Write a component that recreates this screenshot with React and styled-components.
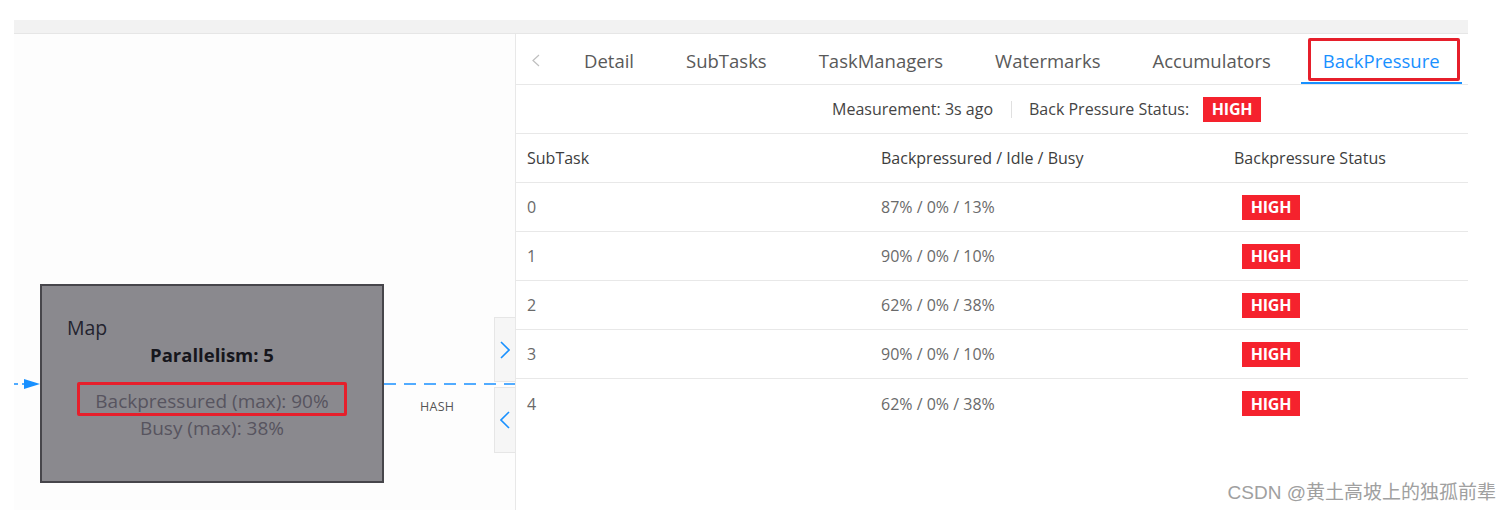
import React from "react";
import styled, { createGlobalStyle } from "styled-components";

const Global = createGlobalStyle`
  html, body { margin: 0; padding: 0; background: #ffffff; }
  body { font-family: "Open Sans", "Noto Sans", sans-serif; width: 1512px; height: 510px; overflow: hidden; }
  * { box-sizing: border-box; }
`;

const Page = styled.div`
  position: relative;
  width: 1512px;
  height: 510px;
  padding: 20px 44px 0 14px;
  display: flex;
  flex-direction: column;
`;

const TopBar = styled.div`
  height: 14px;
  background: #f2f2f2;
  border-bottom: 1px solid #e6e6e6;
  flex-shrink: 0;
`;

const Main = styled.div`
  flex: 1;
  display: flex;
  min-height: 0;
`;

const Canvas = styled.div`
  position: relative;
  width: 502px;
  flex-shrink: 0;
  background: #fdfdfd;
  border-right: 1px solid #e8e8e8;
`;

const Edges = styled.svg`
  position: absolute;
  left: 0;
  top: 0;
  width: 501px;
  height: 476px;
`;

const Node = styled.div`
  position: absolute;
  left: 26px;
  top: 250px;
  width: 344px;
  height: 199px;
  background: #8a898e;
  border: 2px solid #47464b;
  display: flex;
  flex-direction: column;
  padding: 30px 0 0 0;
`;

const NodeTitle = styled.div`
  padding-left: 25px;
  font-size: 19.5px;
  line-height: 24px;
  color: #23232e;
`;

const NodeLine = styled.div`
  align-self: center;
  font-size: ${(p) => (p.$bold ? 18.5 : 19)}px;
  line-height: 24px;
  font-weight: ${(p) => (p.$bold ? 700 : 400)};
  color: ${(p) => (p.$bold ? "#16161c" : "#57545f")};
  margin-top: ${(p) => p.$mt || 0}px;
`;

const Highlight = styled.div`
  align-self: center;
  margin-top: 15px;
  width: 270px;
  height: 34px;
  padding-top: 4px;
  border: 3px solid #e61f2b;
  border-radius: 2px;
  display: flex;
  align-items: center;
  justify-content: center;
  font-size: 19px;
  color: #57545f;
  white-space: nowrap;
`;

const EdgeLabel = styled.div`
  position: absolute;
  left: 406px;
  top: 364px;
  font-size: 12.5px;
  color: #555;
  letter-spacing: 0.3px;
`;

const Collapse = styled.div`
  position: absolute;
  right: 0;
  top: ${(p) => p.$top}px;
  width: 21px;
  height: ${(p) => p.$h}px;
  background: #f6f6f6;
  border: 1px solid #e6e6e6;
  border-right: none;
  display: flex;
  align-items: center;
  justify-content: center;
`;

const Panel = styled.div`
  flex: 1;
  min-width: 0;
  display: flex;
  flex-direction: column;
  background: #fff;
`;

const Tabs = styled.div`
  height: 51px;
  display: flex;
  align-items: stretch;
  border-bottom: 1px solid #e8e8e8;
  padding-left: 16px;
  overflow: hidden;
`;

const TabPrev = styled.div`
  width: 30px;
  flex-shrink: 0;
  display: flex;
  align-items: center;
  justify-content: flex-start;
  padding-top: 2px;
`;

const Tab = styled.div`
  position: relative;
  flex-shrink: 0;
  padding: 5px 22px 0;
  margin-right: 8px;
  display: flex;
  align-items: center;
  font-size: 18.5px;
  color: ${(p) => (p.$active ? "#1890ff" : "#595959")};
  font-weight: ${(p) => (p.$active ? 500 : 400)};
  border-bottom: 2px solid ${(p) => (p.$active ? "#1890ff" : "transparent")};
  white-space: nowrap;
  &:last-child { margin-right: 0; }
`;

const TabMark = styled.div`
  position: absolute;
  left: 7px;
  right: 2px;
  top: 4px;
  bottom: 1px;
  border: 3px solid #e61f2b;
  border-radius: 2px;
`;

const InfoRow = styled.div`
  height: 49px;
  display: flex;
  align-items: center;
  padding-left: 316px;
  border-bottom: 1px solid #e8e8e8;
  font-size: 16px;
  color: #444;
`;

const InfoDivider = styled.span`
  width: 1px;
  height: 17px;
  background: #e0e0e0;
  margin: 0 17px 0 18px;
`;

const Badge = styled.span`
  display: inline-flex;
  align-items: center;
  justify-content: center;
  height: 25px;
  width: 58px;
  background: #f5222d;
  color: #fff;
  font-weight: 700;
  font-size: 16px;
  margin-left: ${(p) => p.$ml || 0}px;
  letter-spacing: -0.2px;
`;

const Row = styled.div`
  height: 49px;
  display: grid;
  grid-template-columns: 354px 353px 1fr;
  align-items: center;
  border-bottom: ${(p) => (p.$last ? "none" : "1px solid #e8e8e8")};
`;

const Cell = styled.div`
  padding-left: 11px;
  font-size: 16px;
  color: ${(p) => (p.$head ? "#3d3d3d" : "#6a6a6a")};
`;

const Watermark = styled.div`
  position: absolute;
  right: 16px;
  top: 477px;
  font-family: "Liberation Sans", "Noto Sans CJK SC", sans-serif;
  font-size: 19px;
  color: #a0a0a0;
  text-shadow: 0 0 2px #fff;
  white-space: nowrap;
`;

const Chevron = ({ dir, color, w = 10, h = 18, sw = 1.6 }) => (
  <svg width={w} height={h} viewBox={`0 0 ${w} ${h}`}>
    {dir === "right" ? (
      <polyline points={`1,1 ${w - 1},${h / 2} 1,${h - 1}`} fill="none" stroke={color} strokeWidth={sw} />
    ) : (
      <polyline points={`${w - 1},1 1,${h / 2} ${w - 1},${h - 1}`} fill="none" stroke={color} strokeWidth={sw} />
    )}
  </svg>
);

const rows = [
  ["0", "87% / 0% / 13%"],
  ["1", "90% / 0% / 10%"],
  ["2", "62% / 0% / 38%"],
  ["3", "90% / 0% / 10%"],
  ["4", "62% / 0% / 38%"],
];

const tabs = ["Detail", "SubTasks", "TaskManagers", "Watermarks", "Accumulators", "BackPressure"];

export default function App() {
  return (
    <>
      <Global />
      <Page>
        <TopBar />
        <Main>
          <Canvas>
            <Edges viewBox="0 0 501 476">
              <line x1="0" y1="350" x2="10" y2="350" stroke="#1890ff" strokeWidth="1.5" strokeDasharray="4 4" />
              <polygon points="10,345 26,350 10,355" fill="#1890ff" />
              <line x1="370" y1="350" x2="501" y2="350" stroke="#1890ff" strokeWidth="1.5" strokeDasharray="12 8" />
            </Edges>
            <Node>
              <NodeTitle>Map</NodeTitle>
              <NodeLine $bold $mt={3}>Parallelism: 5</NodeLine>
              <Highlight>Backpressured (max): 90%</Highlight>
              <NodeLine>Busy (max): 38%</NodeLine>
            </Node>
            <EdgeLabel>HASH</EdgeLabel>
            <Collapse $top={283} $h={65}>
              <Chevron dir="right" color="#1890ff" w={10} h={18} />
            </Collapse>
            <Collapse $top={353} $h={66}>
              <Chevron dir="left" color="#1890ff" w={10} h={18} />
            </Collapse>
          </Canvas>
          <Panel>
            <Tabs>
              <TabPrev>
                <Chevron dir="left" color="#bfbfbf" w={8} h={13} sw={1.2} />
              </TabPrev>
              {tabs.map((t) => (
                <Tab key={t} $active={t === "BackPressure"}>
                  {t}
                  {t === "BackPressure" && <TabMark />}
                </Tab>
              ))}
            </Tabs>
            <InfoRow>
              <span>Measurement: 3s ago</span>
              <InfoDivider />
              <span>Back Pressure Status:</span>
              <Badge $ml={14}>HIGH</Badge>
            </InfoRow>
            <Row>
              <Cell $head>SubTask</Cell>
              <Cell $head>Backpressured / Idle / Busy</Cell>
              <Cell $head>Backpressure Status</Cell>
            </Row>
            {rows.map((r, i) => (
              <Row key={r[0]} $last={i === rows.length - 1}>
                <Cell>{r[0]}</Cell>
                <Cell>{r[1]}</Cell>
                <Cell>
                  <Badge $ml={8}>HIGH</Badge>
                </Cell>
              </Row>
            ))}
          </Panel>
        </Main>
        <Watermark>CSDN @黄土高坡上的独孤前辈</Watermark>
      </Page>
    </>
  );
}
